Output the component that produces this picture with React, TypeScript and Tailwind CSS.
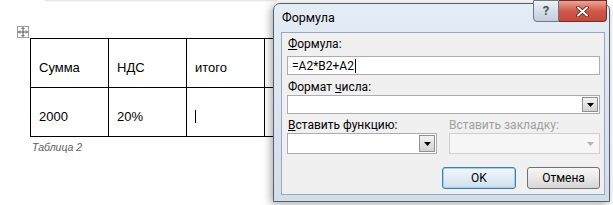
import React from "react";

// Word page with a table, plus the Win7 "Формула" dialog floating over it
const docFont = { fontFamily: '"Liberation Sans", Arial, sans-serif' };
const uiFont = { fontFamily: 'Roboto, "Noto Sans", sans-serif' };

const DownArrow: React.FC<{ disabled?: boolean }> = ({ disabled }) => (
  <svg width="7" height="4" viewBox="0 0 7 4">
    <path d="M0 0h7L3.5 4z" fill={disabled ? "#b4b4b4" : "#000"} />
  </svg>
);

const Select: React.FC<{ disabled?: boolean; className?: string }> = ({
  disabled,
  className,
}) => (
  <div
    className={
      disabled
        ? `flex justify-end border border-[#cfcfcf] bg-[#f6f6f6] p-px ${className}`
        : `flex justify-end border border-[#abadb3] bg-white p-px ${className}`
    }
  >
    {disabled ? (
      <div className="flex w-[16px] items-center justify-center">
        <DownArrow disabled />
      </div>
    ) : (
      <div className="flex w-[16px] items-center justify-center border border-[#909090] bg-gradient-to-b from-[#f3f3f3] to-[#d2d2d2]">
        <DownArrow />
      </div>
    )}
  </div>
);

const MoveHandle = () => (
  <svg width="10" height="10" viewBox="0 0 10 10" fill="none" stroke="#555" strokeWidth="1">
    <path d="M5 0.5v9M0.5 5h9" />
    <path d="M3.5 2L5 0.5 6.5 2M3.5 8L5 9.5 6.5 8M2 3.5L0.5 5 2 6.5M8 3.5L9.5 5 8 6.5" />
  </svg>
);

export default function App() {
  return (
    <div className="relative h-[205px] w-[613px] overflow-hidden bg-white">
      {/* page edge */}
      <div className="ml-[45px] h-[2px] w-[232px] bg-gradient-to-b from-[#dedede] to-white" />

      <div className="ml-[17px] mt-[24px] flex h-[12px] w-[12px] items-center justify-center border border-[#a0a0a0] bg-white">
        <MoveHandle />
      </div>

      <div style={docFont} className="ml-[30px] text-[13px] text-black">
        <div className="grid w-[330px] grid-cols-[78px_78px_78px_96px] border-l border-t border-black">
          {["Сумма", "НДС", "итого", ""].map((t, i) => (
            <div key={`h${i}`} className="flex h-[49px] items-center border-b border-r border-black pl-[8px] pt-[9px]">
              {t}
            </div>
          ))}
          <div className="flex h-[49px] items-center border-b border-r border-black pl-[8px] pt-[9px]">2000</div>
          <div className="flex h-[49px] items-center border-b border-r border-black pl-[8px] pt-[9px]">20%</div>
          <div className="flex h-[49px] items-center border-b border-r border-black pl-[8px] pt-[9px]">
            <span className="h-[13px] w-px bg-black" />
          </div>
          <div className="h-[49px] border-b border-r border-black" />
        </div>
        <div className="ml-[2px] mt-[3px] text-[10.5px] italic leading-[14px] text-[#5a5f66]">Таблица 2</div>
      </div>

      {/* dialog */}
      <div
        style={uiFont}
        className="absolute left-[273px] top-[3px] flex h-[199px] w-[337px] flex-col rounded-t-[7px] border border-[#56606d] bg-gradient-to-b from-[#e4ecf6] to-[#d3deeb] pb-[6px] pl-[7px] pr-[4px] text-[12px] text-black shadow-[-2px_2px_8px_rgba(0,0,0,0.35)]"
      >
        <div className="h-[28px] pl-[1px] pt-[5px] text-[12.5px] leading-[18px]">Формула</div>

        <div className="absolute right-[2px] top-[-4px] flex h-[22px]">
          <div className="flex w-[26px] items-center justify-center rounded-bl-[4px] border border-[#6c7888] bg-gradient-to-b from-[#eef2f7] via-[#d6dee8] to-[#c3cedb] text-[13px] font-bold text-[#4a5566]">
            ?
          </div>
          <div className="flex w-[48px] items-center justify-center rounded-br-[4px] border border-l-0 border-[#7a2a22] bg-gradient-to-b from-[#e9a697] via-[#cf5848] to-[#c24a3a]">
            <svg width="13" height="11" viewBox="0 0 13 11">
              <path d="M2 1.5l9 8M11 1.5l-9 8" stroke="#5a1a12" strokeWidth="3.6" strokeLinecap="round" />
              <path d="M2 1.5l9 8M11 1.5l-9 8" stroke="#fff" strokeWidth="2" strokeLinecap="round" />
            </svg>
          </div>
        </div>

        <div className="flex flex-1 flex-col border border-[#97a8bd] bg-[#f0f0f0] pl-[5px] pr-[4px]">
          <div className="mt-[3px] h-[16px] pl-[1px] leading-[16px]">
            <span className="underline">Ф</span>ормула:
          </div>
          <div className="mt-[4px] flex h-[19px] items-center border border-[#abadb3] bg-white pl-[4px] leading-[16px]">
            =A2*B2+A2
            <span className="ml-px h-[14px] w-px bg-black" />
          </div>

          <div className="mt-[4px] h-[16px] pl-[1px] leading-[16px]">
            Формат <span className="underline">ч</span>исла:
          </div>
          <Select className="h-[19px]" />

          <div className="mt-[4px] flex h-[15px] leading-[14px]">
            <div className="w-[162px] pl-[1px]">
              <span className="underline">В</span>ставить функцию:
            </div>
            <div className="text-[#a0a0a0]">Вставить закладку:</div>
          </div>
          <div className="flex h-[21px] gap-[12px]">
            <Select className="w-[150px]" />
            <Select className="flex-1" disabled />
          </div>

          <div className="mt-[13px] flex h-[22px] justify-end gap-[11px]">
            <button className="w-[74px] rounded-[3px] border border-[#3c7fb1] bg-gradient-to-b from-[#f2f7fb] via-[#e1ecf5] to-[#cfdfec] shadow-[inset_0_0_0_1px_#9fd0f0] text-[12px]">
              OK
            </button>
            <button className="w-[73px] rounded-[3px] border border-[#707070] bg-gradient-to-b from-[#f6f6f6] via-[#e8e8e8] to-[#d6d6d6] text-[12px]">
              Отмена
            </button>
          </div>
        </div>
      </div>
    </div>
  );
}
